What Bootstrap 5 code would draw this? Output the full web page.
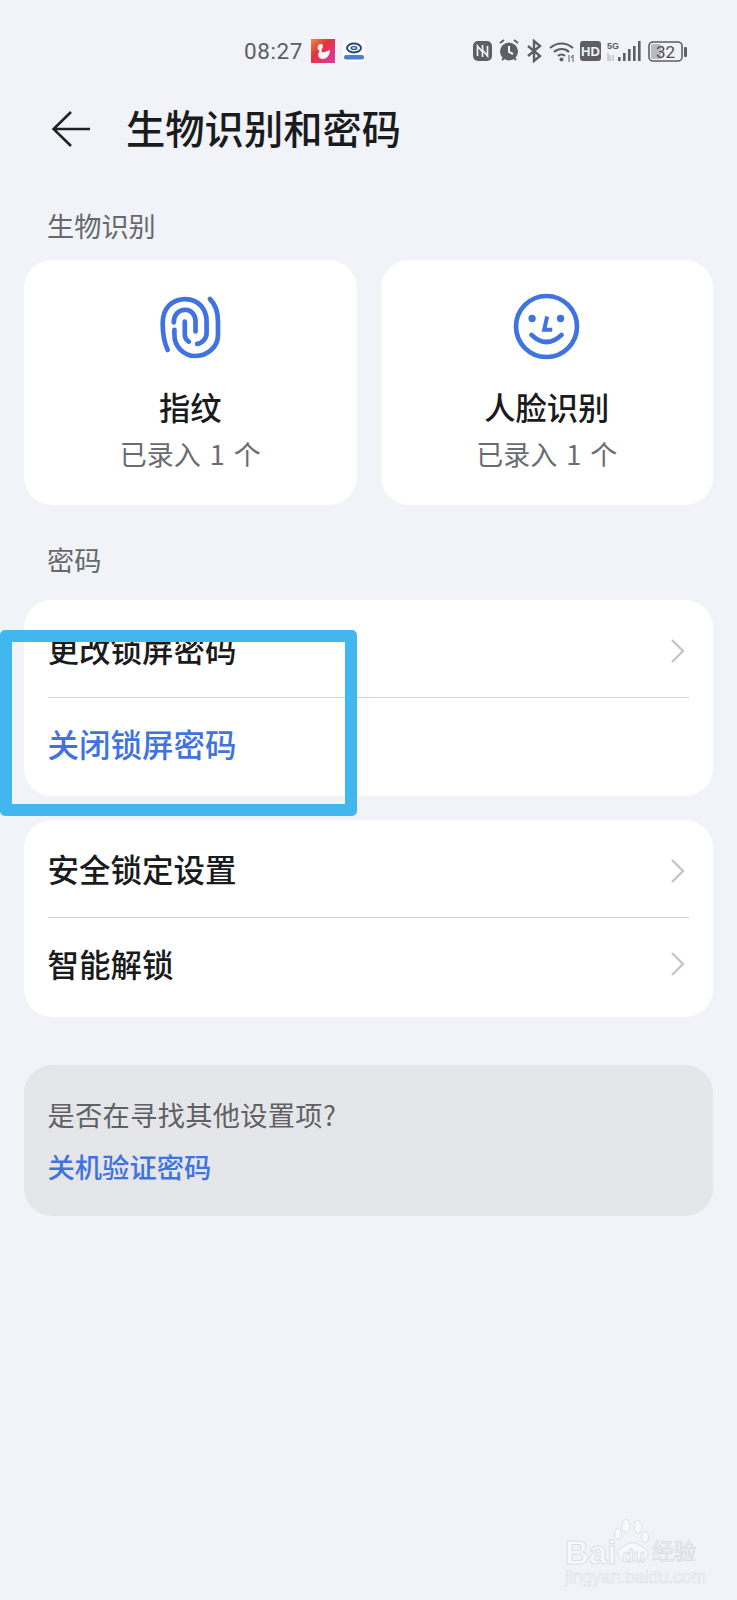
<!DOCTYPE html>
<html lang="zh-CN">
<head>
    <meta charset="UTF-8">
    <meta name="viewport" content="width=device-width, initial-scale=1.0">
    <title>生物识别和密码</title>
    <link href="https://cdn.jsdelivr.net/npm/bootstrap@5.3.3/dist/css/bootstrap.min.css" rel="stylesheet">
    <style>
        body {
            background: #f1f3f8;
            font-family: "Noto Sans CJK SC", "Liberation Sans", sans-serif;
            color: #1a1b1d;
            height: 1600px;
            overflow: hidden;
            position: relative;
        }
        .status-bar { height: 62px; padding: 40px 0 0 244px; color: #5c5f64; }
        .status-time { font-family: Roboto, sans-serif; font-size: 22.5px; line-height: 24px; width: 67px; letter-spacing: .6px; }
        .status-icons { margin-left: 108px; }
        .title-bar { height: 134px; padding-left: 52px; }
        .page-title { font-size: 39.3px; font-weight: 500; line-height: 1; margin: 0 0 4px 36px; }
        .section-label { font-size: 27.2px; color: #66686c; line-height: 32px; padding-left: 47px; }
        .label-bio { margin-top: 13px; margin-bottom: 19px; }
        .label-pwd { margin-top: 38px; margin-bottom: 25px; }
        .bio-wrap { padding: 0 24px; gap: 24px; }
        .bio-card { background: #fff; border-radius: 28px; height: 245px; padding-top: 33px; flex: 1 1 0; }
        .bio-name { font-size: 31.3px; font-weight: 500; line-height: 40px; margin-top: 27px; }
        .bio-sub { font-size: 27px; color: #6b6c6f; line-height: 34px; margin-top: 10px; word-spacing: 3px; }
        .group-card { background: #fff; border-radius: 28px; padding: 0 24px 0 23.5px; margin: 0 24px 24px; }
        .set-row { font-size: 31.5px; font-weight: 500; line-height: 1; }
        .set-row + .set-row { border-top: 1px solid #cfd0d2; }
        .row-top { height: 97px; }
        .row-top svg { margin-top: 5px; }
        .row-low { height: 99px; padding-bottom: 7px; }
        .row-last { height: 100px; padding-bottom: 8px; }
        .link-blue { color: #3f73e0; }
        .hint-card { background: #e5e6e9; border-radius: 28px; margin: 48px 24px 0; height: 151px; padding: 32px 24px 0 23.5px; }
        .hint-q { font-size: 27.2px; color: #5f6165; line-height: 34px; letter-spacing: .35px; }
        .hint-a { font-size: 27.3px; font-weight: 500; line-height: 34px; margin-top: 18px; }
        .mark-box { position: absolute; left: 0; top: 630px; width: 357px; height: 186px; border: 12px solid #42b6ee; border-radius: 5px; }
        .wm-box {
            position: absolute; left: 564px; top: 1516px; width: 135px; height: 70px;
            color: #f8f9fc; -webkit-text-stroke: 1px #dcdfe5;
            font-family: "Liberation Sans", "Noto Sans CJK SC", sans-serif; line-height: 1;
        }
        .wm-bai { font-size: 33px; font-weight: 700; position: absolute; left: 1px; top: 19.5px; }
        .wm-du { font-size: 19px; font-weight: 700; position: absolute; left: 58px; top: 30px; }
        .wm-cn { font-size: 22px; position: absolute; left: 88px; top: 25px; }
        .wm-url { font-size: 17.5px; position: absolute; left: 1px; top: 53px; -webkit-text-stroke-width: .6px; white-space: nowrap; }
        .wm-paw { position: absolute; left: 48px; top: 0; }
    </style>
</head>
<body>
    <div class="status-bar d-flex align-items-center">
        <span class="status-time">08:27</span>
        <svg width="24" height="24" viewBox="0 0 24 24">
            <defs><linearGradient id="swanBg" x1="0" y1="0" x2="1" y2="1"><stop offset="0" stop-color="#ef8a3a"/><stop offset=".4" stop-color="#e8323c"/><stop offset="1" stop-color="#d93aa8"/></linearGradient></defs>
            <rect width="24" height="24" fill="url(#swanBg)"/>
            <path d="M7 11c-1-3 0-6 3-6 2 0 2.500 2 1.500 4-1 2-1.500 3-.5 4 2 1 5-1 8-2 0 5-3 9-7 9-3 0-5-2-5-4 0-2 1.500-3 1.500-4 0-1-.5-1-1.500-1z" fill="#fff" opacity=".95"/>
        </svg>
        <svg class="ms-2" width="22" height="22" viewBox="0 0 22 22">
            <rect width="22" height="22" rx="5" fill="#fff"/>
            <ellipse cx="11" cy="8" rx="7" ry="4.400" fill="none" stroke="#27497f" stroke-width="2"/>
            <ellipse cx="11" cy="8" rx="2.800" ry="1.400" fill="none" stroke="#27497f" stroke-width="1.300"/>
            <rect x="1" y="15" width="20" height="4.500" rx="2" fill="#4a7fd6"/>
        </svg>
        <svg class="status-icons" width="216" height="24" viewBox="0 0 216 24">
            <g fill="#5c5f64">
                <rect x="0" y="2" width="19" height="20" rx="5"/>
                <path d="M4.500 17V7l5 6V6M14.500 7v10l-5-6v7" fill="none" stroke="#f1f3f8" stroke-width="1.700"/>
                <circle cx="36" cy="12.500" r="9"/>
                <path d="M27 4l4-3M45 4l-4-3M29 21l2-2M43 21l-2-2" stroke="#5c5f64" stroke-width="2" fill="none"/>
                <path d="M36 7v6l4 2" stroke="#f1f3f8" stroke-width="2" fill="none"/>
                <path d="M55 7l12 10-6 5V2l6 5-12 10" fill="none" stroke="#5c5f64" stroke-width="2.400"/>
                <path d="M77 9c7-6 16-6 23 0M81 13c4.500-4 11-4 15 0M85 17c2-2 5-2 7 0" fill="none" stroke="#5c5f64" stroke-width="2.200"/>
                <circle cx="88.500" cy="20.500" r="2"/>
                <path d="M96 16v7M98 19l2-3v7" stroke="#5c5f64" stroke-width="1" fill="none"/>
                <rect x="107" y="2" width="21" height="20" rx="3"/>
                <text x="117.500" y="17" font-family="Liberation Sans" font-size="13" font-weight="700" fill="#f1f3f8" text-anchor="middle">HD</text>
                <text x="134" y="10" font-family="Liberation Sans" font-size="9" font-weight="700">5G</text>
                <path d="M135 14v8M137 16v6M140 16v6" stroke="#b7b9bd" stroke-width="1.200"/>
                <rect x="145" y="18" width="2.600" height="4"/><rect x="150" y="14" width="2.600" height="8"/><rect x="155" y="10" width="2.600" height="12"/><rect x="160" y="7" width="2.600" height="15"/><rect x="165" y="2" width="2.600" height="20"/>
                <rect x="176" y="3" width="33" height="19" rx="4" fill="none" stroke="#5c5f64" stroke-width="1.600"/>
                <rect x="178" y="5" width="10" height="15" rx="1.500" fill="#b9bbbf"/>
                <text x="192.500" y="19" font-family="Roboto" font-size="17" fill="#4c4f54" text-anchor="middle">32</text>
                <rect x="211" y="8" width="3" height="10" rx="1"/>
            </g>
        </svg>
    </div>

    <div class="title-bar d-flex align-items-center">
        <svg width="38" height="36" viewBox="0 0 38 36"><path d="M19 1L1.500 18 19 35M1.500 18H38" fill="none" stroke="#1f2023" stroke-width="2.600"/></svg>
        <h1 class="page-title">生物识别和密码</h1>
    </div>

    <div class="section-label label-bio">生物识别</div>
    <div class="bio-wrap d-flex">
        <div class="bio-card text-center">
            <svg width="67" height="67" viewBox="80 40 200 200" fill="none" stroke="#3f73e0" stroke-width="14" stroke-linecap="round">
                <path d="M112 210C100 185 97 160 97 130 97 85 125 58 165 58 205 58 228 90 228 125V160C228 175 215 190 200 192"/>
                <path d="M238 58C255 75 262 100 262 125V165C262 200 232 228 195 228 160 228 132 200 132 165V150"/>
                <path d="M130 128C130 105 145 90 165 90 182 90 195 105 195 125V155"/>
                <path d="M163 125V165C163 172 168 180 175 185"/>
            </svg>
            <div class="bio-name">指纹</div>
            <div class="bio-sub">已录入 1 个</div>
        </div>
        <div class="bio-card text-center">
            <svg width="67" height="67" viewBox="70 40 200 200" fill="none" stroke="#3f73e0" stroke-width="14" stroke-linecap="round">
                <circle cx="170" cy="140" r="91"/>
                <circle cx="127" cy="116" r="11" fill="#3f73e0" stroke="none"/>
                <circle cx="212" cy="116" r="11" fill="#3f73e0" stroke="none"/>
                <path d="M172 110L163 150H187" stroke-linecap="butt" stroke-width="12"/>
                <path d="M125 165Q170 208 215 165"/>
            </svg>
            <div class="bio-name">人脸识别</div>
            <div class="bio-sub">已录入 1 个</div>
        </div>
    </div>

    <div class="section-label label-pwd">密码</div>
    <div class="group-card">
        <div class="set-row row-top d-flex align-items-center justify-content-between">
            <span>更改锁屏密码</span>
            <svg class="me-1" width="15" height="26" viewBox="0 0 15 26"><path d="M2 2l11 11L2 24" fill="none" stroke="#c4c6c9" stroke-width="2.400"/></svg>
        </div>
        <div class="set-row row-low d-flex align-items-center link-blue">关闭锁屏密码</div>
    </div>
    <div class="group-card">
        <div class="set-row row-top d-flex align-items-center justify-content-between">
            <span>安全锁定设置</span>
            <svg class="me-1" width="15" height="26" viewBox="0 0 15 26"><path d="M2 2l11 11L2 24" fill="none" stroke="#c4c6c9" stroke-width="2.400"/></svg>
        </div>
        <div class="set-row row-last d-flex align-items-center justify-content-between">
            <span>智能解锁</span>
            <svg class="me-1" width="15" height="26" viewBox="0 0 15 26"><path d="M2 2l11 11L2 24" fill="none" stroke="#c4c6c9" stroke-width="2.400"/></svg>
        </div>
    </div>

    <div class="hint-card">
        <div class="hint-q">是否在寻找其他设置项?</div>
        <div class="hint-a link-blue">关机验证密码</div>
    </div>

    <div class="mark-box"></div>

    <div class="wm-box">
        <svg class="wm-paw" width="44" height="50" viewBox="0 0 44 50" fill="#f8f9fc" stroke="#dcdfe5">
            <ellipse cx="6" cy="18" rx="3.500" ry="5.500"/>
            <ellipse cx="14" cy="10" rx="4" ry="6.500"/>
            <ellipse cx="26" cy="11" rx="4" ry="6.500"/>
            <ellipse cx="33" cy="21" rx="3.500" ry="5.500"/>
            <path d="M6 37c0-5 5-6 8-8 4-3 9-3 13 0 3 2 9 3 9 9 0 6-6 8-10 7-4-1-7-1-11 0-5 1-9-3-9-8z"/>
        </svg>
        <span class="wm-bai">Bai</span>
        <span class="wm-du">du</span>
        <span class="wm-cn">经验</span>
        <span class="wm-url">jingyan.baidu.com</span>
    </div>
</body>
</html>
